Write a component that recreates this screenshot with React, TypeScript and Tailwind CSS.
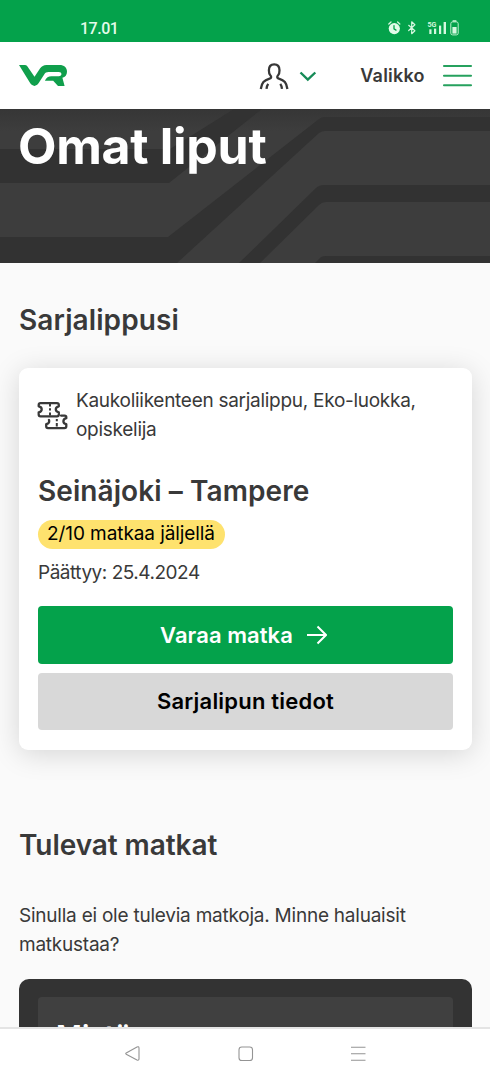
import React from "react";

function StatusIcons() {
  return (
    <svg className="mt-[19px] h-[18px] w-[74px]" viewBox="386 19 74 18" fill="none">
      <g stroke="#d5f7df" strokeWidth="1.3" strokeLinecap="round">
        <circle cx="394.3" cy="28.6" r="5.6" fill="#e2fbe9" stroke="none" />
        <path d="M388.8 24l2.2-2M399.8 24l-2.2-2" />
        <path d="M394 25.6v3.2l2 1.3" stroke="#04a24b" />
        <path d="M408.700 25.300l6.200 5.400-3.200 3V21.800l3.200 3-6.200 5.700" strokeWidth="1.200" strokeLinejoin="round" />
      </g>
      <g fill="#d5f7df">
        <rect x="429.300" y="29.300" width="2.200" height="4.700" />
        <rect x="434" y="28.600" width="2.200" height="5.400" />
        <rect x="439" y="25.600" width="2.200" height="8.400" />
        <rect x="443.600" y="22" width="2.400" height="12" />
        <text x="427.500" y="27.300" fontSize="8" fontWeight="700" fontFamily="Roboto, sans-serif" textLength="9" lengthAdjust="spacingAndGlyphs">5G</text>
        <rect x="452.500" y="20.200" width="4" height="1.600" rx=".5" />
        <rect x="452.400" y="27" width="4.200" height="6.600" />
      </g>
      <rect x="450.800" y="21.900" width="7.400" height="13" rx="1.800" stroke="#bdf0cc" />
    </svg>
  );
}

function VrLogo() {
  return (
    <svg className="h-[22px] w-12" viewBox="19 65 48 22" fill="none">
      <path
        d="M19 65h5.800q1.600 0 2.500 1.300l7.200 10.500 5.500-8.300Q42.400 65 46.400 65H59.500c4.600 0 7.500 2.700 7.500 6.700 0 3-1.700 5.300-4.600 6.100l2.200 8.200h-6.600l-4.800-5.200h-8.300c1.300-3.200 3.600-4.600 6.500-4.600h7.400c1.800 0 2.600-.8 2.600-2.100s-.9-2.100-2.600-2.100H48.500c-2 0-3.200.7-4.300 2.400l-5.500 8.700c-2.300 3.700-6.200 3.700-8.600 0z"
        fill="#109f4c"
      />
    </svg>
  );
}

function TicketIcon() {
  return (
    <svg className="h-8 w-8 shrink-0" viewBox="37 400 32 32" fill="none" stroke="#393939" strokeWidth="2.300" strokeLinejoin="round">
      <path d="M40.500 403.200H57q1.800 0 1.800 1.800v1.300q-3 .6-3 3t3 3v2.300q0 1.700-1.800 1.700H40.500q-1.800 0-1.800-1.700v-2.300q3-.5 3-3t-3-3V405q0-1.800 1.800-1.800z" />
      <path d="M50 404v2.400M50 408.300v2.200M50 412.400v3" strokeWidth="2" />
      <path d="M61 415.600h3.600q1.700 0 1.700 1.700v.9q-2.900.7-2.900 3t2.900 3v2.100q0 1.800-1.800 1.800H48q-1.800 0-1.800-1.800v-2.100q3-.8 3-3 0-.8-.3-1.300" strokeLinecap="round" />
      <path d="M56.800 419v2.300M56.800 423.100v3.400" strokeWidth="2" />
    </svg>
  );
}

function HeroPattern() {
  return (
    <svg className="absolute inset-0 h-full w-full" viewBox="0 109 490 154" preserveAspectRatio="none">
      <defs>
        <linearGradient id="topShade" x1="0" y1="0" x2="0" y2="1">
          <stop offset="0" stopColor="#363636" />
          <stop offset="1" stopColor="#3d3d3d" />
        </linearGradient>
      </defs>
      <rect y="109" width="490" height="154" fill="#3d3d3d" />
      <rect y="109" width="490" height="22" fill="url(#topShade)" />
      <g fill="#323232">
        <path d="M0 149H170L234 109H262L169 183H0z" />
        <path d="M0 237H168L319 119Q321 117 325 117H490V131H325Q322 131 319 133L177 263H0z" />
        <path d="M239 263L316 188Q319 185 324 185H490V202H326Q322 202 319 205L260 263z" />
        <path d="M315 263L321 257Q323 256 326 256H490V263z" />
      </g>
    </svg>
  );
}

export default function App() {
  return (
    <div className="flex h-[1080px] w-[490px] flex-col overflow-hidden bg-[#fafafa] font-['Inter','Liberation_Sans',sans-serif] text-[#393939]">
      <div className="flex h-[42px] shrink-0 justify-between bg-[#04a24b] pr-[30px] pl-[80px]">
        <span className="mt-[19px] font-['Roboto',sans-serif] text-[16px] leading-[19px] font-medium tracking-[-0.5px] text-[#e4fbea]">17.01</span>
        <StatusIcons />
      </div>

      <header className="flex h-[67px] shrink-0 items-center bg-white pl-[19px]">
        <VrLogo />
        <button className="ml-[192px] flex items-center" aria-label="Profiili">
          <svg className="h-[28px] w-[30px]" viewBox="259 62 30 28" fill="none" stroke="#373737" strokeWidth="2.300">
            <path d="M260.800 89c1-6.500 3.100-8.500 8.700-10.300 2-.7 2.100-2.200.8-3.500-1-1-1.400-2.700-1.400-5 0-3.700 2.100-5.900 5.300-5.900s5.300 2.200 5.300 5.900c0 2.300-.4 4-1.400 5-1.300 1.300-1.200 2.800.8 3.500 5.600 1.800 7.500 3.800 8.500 10.300" />
            <path d="M266.500 88.800q.3-3 1.700-5M282 88.800q-.3-3-1.700-5" />
          </svg>
          <svg className="ml-[10px] h-[12px] w-[19px]" viewBox="299 70 19 12" fill="none" stroke="#168b57" strokeWidth="2.400">
            <path d="M300.500 72.500l7.300 7.200 7.500-7.200" />
          </svg>
        </button>
        <button className="ml-[42px] flex items-center">
          <span className="w-[65px] text-[18px] leading-6 font-semibold tracking-[0.2px]">Valikko</span>
          <svg className="ml-[17px] h-[24px] w-[32px]" viewBox="442 64 32 24" stroke="#26a15e" strokeWidth="2.100" strokeLinecap="round">
            <path d="M444 66h27M444 75.700h27M444 85.300h27" />
          </svg>
        </button>
      </header>

      <section className="relative h-[154px] shrink-0 overflow-hidden">
        <HeroPattern />
        <h1 className="relative mt-[7px] ml-[18px] text-[50px] leading-[60px] font-[650] tracking-[-0.3px] whitespace-nowrap text-white">Omat liput</h1>
      </section>

      <main className="flex min-h-0 grow flex-col overflow-hidden px-[19px]">
        <h2 className="mt-[39px] text-[28px] leading-9 font-semibold tracking-[0.1px]">Sarjalippusi</h2>

        <article className="mt-[30px] mr-[-1px] flex h-[382px] shrink-0 flex-col rounded-[9px] bg-white px-[19px] shadow-[0_4px_28px_rgba(0,0,0,0.15)]">
          <div className="mt-[18px] flex items-start">
            <div className="mt-[14px] -ml-px h-8 w-8"><TicketIcon /></div>
            <p className="ml-[7px] text-[19px] leading-[29px] tracking-[-0.28px] whitespace-nowrap">
              Kaukoliikenteen sarjalippu, Eko-luokka,<br />opiskelija
            </p>
          </div>
          <h3 className="mt-[29px] text-[28px] leading-9 font-semibold tracking-[0.08px] whitespace-nowrap">Seinäjoki – Tampere</h3>
          <span className="mt-[11px] flex h-[29px] w-[187px] items-center rounded-full bg-[#fee26e] pl-[9px] text-[19px] tracking-[-0.080px] whitespace-nowrap text-black">2/10 matkaa jäljellä</span>
          <p className="mt-[9px] text-[19px] leading-[29px] tracking-[-0.480px] whitespace-nowrap">Päättyy: 25.4.2024</p>
          <button className="mt-[19px] flex h-[58px] shrink-0 items-center justify-center rounded-[4px] bg-[#04a24b] pr-[4px] text-[22px] font-semibold text-white">
            <span className="tracking-[0.060px]">Varaa matka</span>
            <svg className="ml-[14px] h-5 w-5" viewBox="0 0 20 20" fill="none" stroke="white" strokeWidth="2">
              <path d="M0 10h18.500M10.500 1.500l8.500 8.500-8.500 8.500" />
            </svg>
          </button>
          <button className="mt-[9px] h-[57px] shrink-0 rounded-[4px] bg-[#d8d8d8] text-[22px] font-semibold text-black">
            <span className="tracking-[0.200px]">Sarjalipun tiedot</span>
          </button>
        </article>

        <h2 className="mt-[77px] text-[28px] leading-9 font-semibold tracking-[-0.070px]">Tulevat matkat</h2>
        <p className="mt-[39px] text-[19px] leading-[28.500px] tracking-[-0.230px] whitespace-nowrap">
          Sinulla ei ole tulevia matkoja. Minne haluaisit<br />matkustaa?
        </p>
        <div className="mt-[20px] mr-[-1px] h-[120px] shrink-0 rounded-t-[10px] bg-[#333333] px-[19px] pt-[18px]">
          <div className="h-[102px] rounded-t-[4px] bg-[#404040] pt-[21px] pl-[18px]">
            <span className="block text-[28px] leading-9 font-semibold tracking-[0.1px] text-white">Mistä</span>
          </div>
        </div>
      </main>

      <nav className="z-10 flex h-[53px] shrink-0 justify-center border-t-2 border-[#e4e4e4] bg-white">
        <svg className="mt-[15px] ml-[2px] h-5 w-[260px]" viewBox="116 1044 260 20" fill="none" stroke="#949494" strokeWidth="1.100">
          <path d="M126.200 1053l10.800-6q1.800-.8 2 1v11q-.2 1.700-2 1l-10.800-5.800q-1-.6 0-1.200z" />
          <rect x="239" y="1047" width="13.500" height="13.500" rx="2.800" />
          <path d="M351 1047.200h14.500M351 1053.700h14.500M351 1060.300h14.500" />
        </svg>
      </nav>
    </div>
  );
}
